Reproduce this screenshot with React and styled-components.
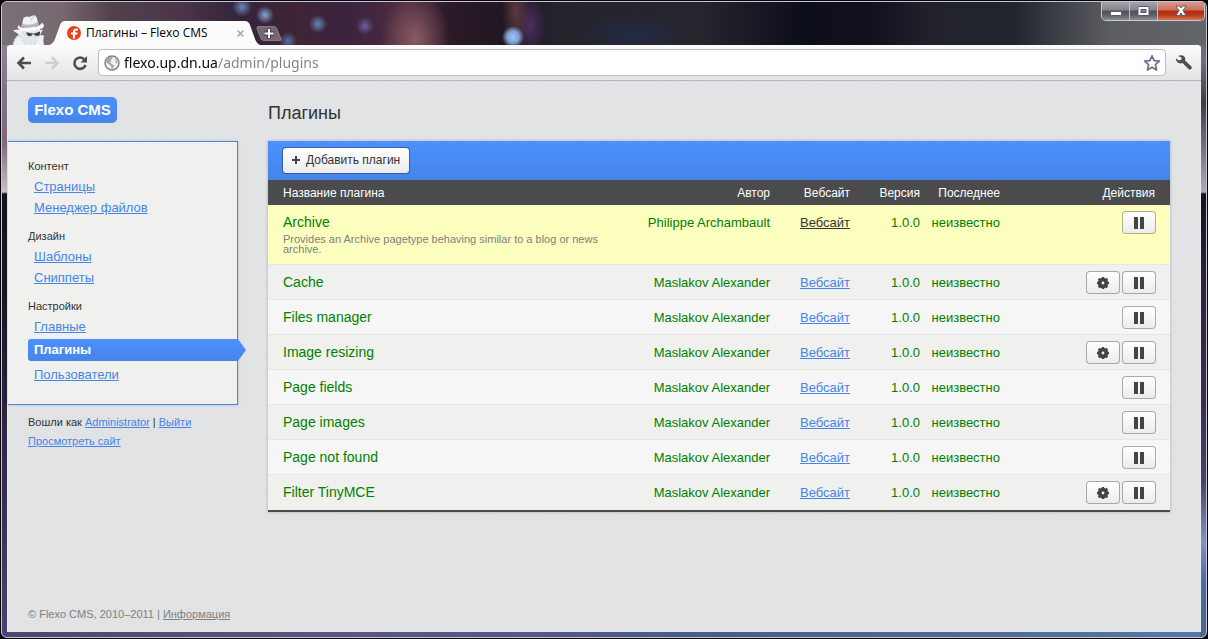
import React from "react";
import styled, { createGlobalStyle, css } from "styled-components";

const GlobalStyle = createGlobalStyle`
  *, *::before, *::after { box-sizing: border-box; }
  html, body { margin: 0; background: #08060c; }
  body { font-family: "Liberation Sans", Arial, sans-serif; font-size: 13px; color: #333; }
  button, input { font-family: inherit; margin: 0; }
`;

const BLUE = "#4585e8";
const uiFont = `"Open Sans", "Noto Sans", sans-serif`;

/* ---------- window chrome ---------- */

const Desktop = styled.div`
  display: flex;
  min-height: 100vh;
  padding: 1px;
`;

const Window = styled.div`
  flex: 1;
  min-width: 0;
  display: flex;
  flex-direction: column;
  padding: 0 5px 5px;
  border: 1px solid #c9c6d0;
  border-radius: 6px;
  overflow: hidden;
  background:
    linear-gradient(#6f6670 0, #8f7f96 45px, #85708a 90px, #806878 140px, #c9c2c8 190px, #17111f 192px, #1d1628 300px, #352c4c 480px, #4a4470 100%) 0 0 / 6px 100% no-repeat,
    linear-gradient(#5c5e63 0, #6d7076 60px, #3c3e44 100px, #a9abb0 190px, #14131f 192px, #2d2340 280px, #3b2d52 400px, #45456f 480px, #8193c4 540px, #4a6aa2 580px, #49678f 100%) 100% 0 / 6px 100% no-repeat,
    linear-gradient(90deg, #4b4673, #5a5685 30%, #4b5c8c 60%, #5578a8) 0 100% / 100% 6px no-repeat,
    #1d1c26;
`;

const TitleBar = styled.header`
  display: flex;
  height: 43px;
  margin: 0 -5px;
  padding-left: 10px;
  background:
    radial-gradient(circle at 240px 5px, #6d86b8 0, transparent 10px),
    radial-gradient(circle at 263px 13px, #86a4d6 0, transparent 9px),
    radial-gradient(circle at 316px 22px, #6486bb 0, transparent 9px),
    radial-gradient(circle at 363px 24px, #6a5e9c 0, transparent 9px),
    radial-gradient(circle at 286px 39px, #5370a5 0, transparent 9px),
    radial-gradient(circle at 511px 35px, #a3c4f0 0, #7d9fd3 6px, transparent 11px),
    radial-gradient(ellipse 14px 40px at 514px 8px, #5d3a3f, transparent),
    radial-gradient(ellipse 16px 30px at 528px 24px, #4a2f61, transparent),
    radial-gradient(ellipse 34px 48px at 413px 36px, #8a5a64, transparent),
    radial-gradient(ellipse 50px 20px at 632px 32px, #222b47, transparent),
    linear-gradient(90deg, #7a7079 0, #77696f 60px, #51414c 110px, #4b3548 180px, #33243c 235px, #402436 290px, #3c2440 350px, #4d2a3d 400px, #2b1a28 450px, #201722 500px, #25242d 560px, #25252e 700px, #0c0e1a 800px, #10111d 870px, #21222c 930px, #20242d 1010px, #5c5e63 1110px, #62656a 100%);
`;

const Incognito = styled.div`
  flex: none;
  width: 34px;
  padding-top: 12px;
  svg { display: block; }
`;

const Tab = styled.div`
  position: relative;
  flex: none;
  display: flex;
  align-items: center;
  width: 212px;
  height: 24px;
  margin: 19px 0 0 2px;
  padding: 0 14px 0 19px;
`;

const TabShape = styled.svg`
  position: absolute;
  inset: 0;
`;

const TabTitle = styled.button`
  position: relative;
  flex: 1;
  display: flex;
  align-items: center;
  gap: 5px;
  padding: 0;
  border: 0;
  background: none;
  color: #000;
  font: 12px/18px ${uiFont};
  white-space: nowrap;
`;

const PlainButton = styled.button`
  position: relative;
  flex: none;
  display: flex;
  align-items: center;
  justify-content: center;
  width: ${(p) => p.$w}px;
  height: ${(p) => p.$h}px;
  padding: 0;
  border: 0;
  background: none;
  svg { display: block; }
`;

const NewTab = styled(PlainButton)`
  margin: 24px 0 0 -4px;
`;

const Controls = styled.div`
  display: flex;
  flex: none;
  height: 19px;
  margin: 0 1px 0 auto;
  border: 1px solid #c9c9cd;
  border-top: 0;
  border-radius: 0 0 5px 5px;
  overflow: hidden;
`;

const Control = styled.button`
  display: flex;
  align-items: center;
  justify-content: center;
  width: ${(p) => (p.$close ? 46 : 28)}px;
  padding: 0;
  border: 0;
  border-right: ${(p) => (p.$close ? 0 : "1px solid #c0c0c6")};
  background: ${(p) =>
    p.$close
      ? "linear-gradient(#d99a8c 0, #c9705c 8px, #b02c12 9px, #b8381a 13px, #d4785a)"
      : "linear-gradient(#a3a4a8 0, #85868c 8px, #50525a 9px, #5d5f67 13px, #8c8e94)"};
`;

const Toolbar = styled.div`
  display: flex;
  align-items: center;
  height: 36px;
  padding: 0 5px;
  border-bottom: 1px solid #b4b5bf;
  border-radius: 3px 3px 0 0;
  background: linear-gradient(#fcfcfc, #e3e3e3);
`;

const NavButtons = styled.div`
  display: flex;
  flex: none;
  gap: 4px;
  margin-right: 6px;
`;

const Omnibox = styled.form`
  flex: 1;
  min-width: 0;
  display: flex;
  align-items: center;
  gap: 4px;
  height: 27px;
  margin-right: 6px;
  padding: 0 3px 0 5px;
  border: 1px solid #bdbdbf;
  border-radius: 4px;
  background: #fff;
`;

const Address = styled.input`
  flex: 1;
  min-width: 0;
  height: 22px;
  padding: 0;
  border: 0;
  outline: 0;
  font: 14px/22px "Noto Sans", sans-serif;
  color: transparent;
  background: linear-gradient(90deg, #0a0a0a 93px, #808080 93px);
  background-clip: text;
`;

/* ---------- page ---------- */

const Page = styled.div`
  flex: 1;
  display: flex;
  flex-direction: column;
  border-left: 1px solid #e9eaeb;
  border-right: 1px solid #e9eaeb;
  background: repeating-linear-gradient(135deg, #e2e4e5 0 1px, #e0e2e3 1px 3px);
`;

const Columns = styled.div`
  display: flex;
  align-items: flex-start;
  gap: 30px;
  padding-right: 30px;
`;

const Sidebar = styled.aside`
  flex: none;
  width: 230px;
  padding-top: 16px;
`;

const Logo = styled.a`
  display: block;
  width: 89px;
  margin: 0 0 18px 20px;
  border-radius: 5px;
  background: linear-gradient(#4d90fe, ${BLUE});
  color: #fff;
  font-size: 15px;
  font-weight: bold;
  line-height: 26px;
  text-align: center;
  text-decoration: none;
  white-space: nowrap;
`;

const Menu = styled.nav`
  padding: 15px 0 19px 20px;
  border: 1px solid ${BLUE};
  border-left: 0;
  background: #f0f0ee;
  box-shadow: 0 0 3px rgba(0, 0, 0, 0.15);
`;

const MenuGroup = styled.section`
  & + & { margin-top: 9px; }
`;

const MenuHeading = styled.h2`
  margin: 0;
  color: #333;
  font-size: 11px;
  font-weight: normal;
  line-height: 19px;
`;

const MenuList = styled.ul`
  margin: 0;
  padding: 0;
  list-style: none;
`;

const Link = styled.a`
  color: ${(p) => (p.$dark ? "#333" : p.$muted ? "#808080" : BLUE)};
  text-decoration: underline;
`;

const MenuItem = styled.li`
  position: relative;
  padding-left: 6px;
  line-height: 21px;
  ${(p) =>
    p.$active &&
    css`
      margin: 2px -1px 3px 0;
      border-radius: 3px 0 0 3px;
      background: linear-gradient(#4d90fe, ${BLUE});
      line-height: 22px;
      font-weight: bold;
      ${Link} { color: #fff; text-decoration: none; }
      &::after {
        content: "";
        position: absolute;
        top: 0;
        left: 100%;
        width: 8px;
        height: 100%;
        background: inherit;
        clip-path: polygon(0 0, 100% 50%, 0 100%);
      }
    `}
`;

const Account = styled.div`
  padding: 8px 0 0 20px;
  font-size: 11px;
  line-height: 19px;
  p { margin: 0; }
`;

const Main = styled.main`
  flex: 1;
  min-width: 0;
  padding-top: 20px;
`;

const Title = styled.h1`
  margin: 0 0 16px;
  font-size: 18px;
  font-weight: normal;
  line-height: 24px;
`;

const Panel = styled.div`
  border-bottom: 2px solid #4b4b4d;
  background: #f0f0ee;
  box-shadow: 0 0 3px rgba(0, 0, 0, 0.25);
`;

const Actions = styled.div`
  display: flex;
  height: 39px;
  padding: 6px 14px;
  background: linear-gradient(#4d90fe, ${BLUE});
`;

const Button = styled.button`
  display: inline-flex;
  align-items: center;
  justify-content: center;
  gap: 6px;
  height: ${(p) => (p.$small ? 23 : 27)}px;
  width: ${(p) => (p.$small ? "34px" : "auto")};
  padding: ${(p) => (p.$small ? "0" : "0 9px 1px 9px")};
  border: 1px solid rgba(0, 0, 0, 0.3);
  border-radius: 4px;
  background: linear-gradient(#fff, #ececec) padding-box;
  color: #333;
  font-size: 12px;
  white-space: nowrap;
`;

const Table = styled.table`
  width: 100%;
  table-layout: fixed;
  border-collapse: separate;
  border-spacing: 0;
`;

const Head = styled.th`
  width: ${(p) => (p.$w ? p.$w + "px" : "auto")};
  height: 25px;
  padding: ${(p) => (p.$first ? "0 0 0 15px" : p.$last ? "0 15px 0 0" : "0")};
  background: #4b4b4d;
  color: #fff;
  font-size: 12px;
  font-weight: normal;
  text-align: ${(p) => (p.$first ? "left" : "right")};
`;

const Row = styled.tr`
  background: #f6f6f6;
  &:nth-child(even) { background: #f0f0ee; }
  &:first-child { background: #fdffbf; }
`;

const Cell = styled.td`
  height: 35px;
  padding: 9px 0 0;
  border-bottom: 1px solid #e6e6e6;
  color: #008000;
  line-height: 17px;
  text-align: right;
  vertical-align: top;
  ${Row}:last-child & { border-bottom-color: #f0f0ee; }
`;

const NameCell = styled(Cell)`
  padding: 8px 20px 8px 15px;
  text-align: left;
  font-size: 14px;
  line-height: 18px;
`;

const ButtonCell = styled(Cell)`
  padding: 6px 14px 0 0;
`;

const ButtonGroup = styled.div`
  display: flex;
  justify-content: flex-end;
  gap: 2px;
`;

const Description = styled.p`
  margin: 3px 0 2px;
  color: #808080;
  font-size: 11px;
  line-height: 10px;
`;

const Footer = styled.footer`
  margin-top: auto;
  padding: 0 20px 8px;
  color: #808080;
  font-size: 11px;
  line-height: 19px;
`;

/* ---------- icons ---------- */

const SpyIcon = () => (
  <svg width="34" height="31" viewBox="0 0 34 31">
    <path d="M1 31 Q2 24 7 20.500 L1 16.500 Q5 15 10 16 Q18 14 26 16.500 L31 15.500 L28 21 L32 21.500 Q30.500 26 32 31Z" fill="#eef1f5" />
    <path d="M1 31 Q2 24 7 20.500 L14 31 M28 21 L22 31" fill="none" stroke="#c5ccd8" />
    <path d="M8 21 Q9 27 17 31 H20 Q27 27 28 21 Q18 25 8 21Z" fill="#e2e6ed" />
    <path d="M10 15 Q18 18.500 28 14.500 V19 Q26 24 18.500 23.500 Q11 24 10 18Z" fill="#dfe2e7" />
    <path d="M14.500 18.300 L20 19.500 L22.500 19.500 L28 17.500 Q28.500 22 25.500 22 Q22.500 22 21.800 20.300 H20.500 Q19.800 22.200 17.500 22.200 Q14.500 22 14.500 18.300Z" fill="#443e48" />
    <path d="M6.500 11 Q7.500 13.500 11 13.800 L25 12.500 Q29.500 10.500 30 8.500 Q34 12 30 14.500 Q18 19.500 9 16.500 Q4 14 6.500 11Z" fill="#fafafa" />
    <path d="M9.500 12.500 L11.500 4 Q14 1.500 17.500 3 Q21 .5 24 2 Q25.500 5 26.500 11 Q18 15.500 9.500 12.500Z" fill="#f1f1f3" />
    <path d="M10.200 9.500 Q18 12.500 26 8 L26.700 11 Q18 15.500 9.500 12.700Z" fill="#b5bbc3" />
    <path d="M17.500 3 L18.500 8 L24 2 Q21 .5 17.500 3Z" fill="#dcdfe4" />
  </svg>
);

const Favicon = () => (
  <svg width="14" height="14" viewBox="0 0 14 14">
    <circle cx="7" cy="7" r="7" fill="#e8401c" />
    <path d="M11 3.500 H9.500 Q7 3.500 7 6 V12.500 M4 7.500 H10.500" fill="none" stroke="#fff" strokeWidth="2.200" />
  </svg>
);

const CloseIcon = () => (
  <svg width="7" height="7" viewBox="0 0 7 7">
    <path d="M.5 .5 L6.500 6.500 M6.500 .5 L.5 6.500" stroke="#a5a5a5" strokeWidth="1.500" />
  </svg>
);

const NewTabIcon = () => (
  <svg width="26" height="15" viewBox="0 0 26 15">
    <path d="M2 .5 H18 Q20 .5 21 3 L25 13 Q25.500 14.500 24 14.500 H8 Q5.500 14.500 4.500 12 L1 3 Q.5 .5 2 .5Z" fill="#fff" fillOpacity=".3" stroke="#a79ba6" strokeOpacity=".6" />
    <path d="M13 2.500 V12.500 M8 7.500 H18" stroke="#453945" strokeWidth="4" />
    <path d="M13 3 V12 M8.500 7.500 H17.500" stroke="#fff" strokeWidth="2" />
  </svg>
);

const ArrowIcon = ({ color, flip }) => (
  <svg width="16" height="14" viewBox="0 0 16 14" transform={flip ? "scale(-1 1)" : undefined}>
    <path d="M8 1.500 L2.500 7 L8 12.500 M3 7 H15" fill="none" stroke={color} strokeWidth="2.600" />
  </svg>
);

const ReloadIcon = () => (
  <svg width="16" height="16" viewBox="0 0 16 16">
    <path d="M12.500 4.500 A5.700 5.700 0 1 0 13.500 10" fill="none" stroke="#4d4d4d" strokeWidth="2.600" />
    <path d="M15 1 V7.500 H8.500Z" fill="#4d4d4d" />
  </svg>
);

const GlobeIcon = () => (
  <svg width="16" height="16" viewBox="0 0 16 16">
    <circle cx="8" cy="8" r="7" fill="#f2f2f2" stroke="#828282" strokeWidth="1.500" />
    <path d="M2 5 Q4 1.500 8 2 L9 3.500 L6.500 5 L7.500 7 L5.500 7 L8.500 9.500 L10.500 10.500 L9 13.500 L7.500 14 L7 11 L4.500 9 L2.500 8Z" fill="#a9a9a9" />
    <path d="M10.500 3 L13 4.500 L14 7.500 L12.500 9 L11 7 L11.500 5Z" fill="#bdbdbd" />
  </svg>
);

const StarIcon = () => (
  <svg width="18" height="18" viewBox="0 0 18 18">
    <path d="M9 1.800 L11.100 6.700 L16.400 7.200 L12.400 10.700 L13.600 15.900 L9 13.200 L4.400 15.900 L5.600 10.700 L1.600 7.200 L6.900 6.700Z" fill="#fff" stroke="#65708a" strokeWidth="1.700" strokeLinejoin="round" />
  </svg>
);

const WrenchIcon = () => (
  <svg width="18" height="17" viewBox="0 0 18 17">
    <path d="M3 2 Q8 0 10 3.500 Q10.500 5.500 10 6.500 L16.500 12.500 Q17.500 14.500 15.500 15.500 Q14 16 13 14.500 L7.500 9 Q3 10.500 1 6 L1 4.500 L4 6.500 L6.500 5.500 V3.500Z" fill="#4d4d4d" />
  </svg>
);

const MinimizeIcon = () => (
  <svg width="12" height="12" viewBox="0 0 12 12">
    <rect x=".5" y="6.500" width="11" height="4" rx="1" fill="#fff" stroke="#55586a" />
  </svg>
);

const MaximizeIcon = () => (
  <svg width="13" height="12" viewBox="0 0 13 12">
    <rect x="1" y="1.500" width="11" height="9" rx="1" fill="#fff" stroke="#55586a" />
    <rect x="4" y="4.500" width="5" height="3" fill="#84868c" stroke="#55586a" />
  </svg>
);

const WindowCloseIcon = () => (
  <svg width="14" height="12" viewBox="0 0 14 12">
    <path d="M2 1 H5.500 L7 3 L8.500 1 H12 L9 5.500 L12 10.500 H8.500 L7 8 L5.500 10.500 H2 L5 5.500Z" fill="#fff" stroke="#55586a" strokeWidth=".9" />
  </svg>
);

const PlusIcon = () => (
  <svg width="8" height="8" viewBox="0 0 8 8">
    <path d="M4 0 V8 M0 4 H8" stroke="#444" strokeWidth="2" />
  </svg>
);

const PauseIcon = () => (
  <svg width="10" height="12" viewBox="0 0 10 12">
    <path d="M0 0 H4 V12 H0Z M6 0 H10 V12 H6Z" fill="#444" />
  </svg>
);

const GearIcon = () => (
  <svg width="12" height="12" viewBox="0 0 12 12">
    <circle cx="6" cy="6" r="3.300" fill="none" stroke="#444" strokeWidth="3.800" />
    <path d="M6 0 V3 M6 9 V12 M0 6 H3 M9 6 H12 M1.700 1.700 L4 4 M8 8 L10.300 10.300 M10.300 1.700 L8 4 M4 8 L1.700 10.300" stroke="#444" strokeWidth="2.400" />
  </svg>
);

/* ---------- data ---------- */

const menu = [
  { heading: "Контент", items: ["Страницы", "Менеджер файлов"] },
  { heading: "Дизайн", items: ["Шаблоны", "Сниппеты"] },
  { heading: "Настройки", items: ["Главные", "Плагины", "Пользователи"] },
];

const ALEX = "Maslakov Alexander";
const plugins = [
  {
    name: "Archive",
    author: "Philippe Archambault",
    description: "Provides an Archive pagetype behaving similar to a blog or news archive.",
  },
  { name: "Cache", author: ALEX, settings: true },
  { name: "Files manager", author: ALEX },
  { name: "Image resizing", author: ALEX, settings: true },
  { name: "Page fields", author: ALEX },
  { name: "Page images", author: ALEX },
  { name: "Page not found", author: ALEX },
  { name: "Filter TinyMCE", author: ALEX, settings: true },
];

export default function App() {
  return (
    <Desktop>
      <GlobalStyle />
      <Window>
        <TitleBar>
          <Incognito><SpyIcon /></Incognito>
          <Tab>
            <TabShape width="212" height="24" viewBox="0 0 212 24" aria-hidden="true">
              <path d="M1 24 Q5 23 7 18 L12 4 Q13.500 0 17 0 H197 Q200.500 0 202 4 L207 18 Q209 23 212 24Z" fill="#fcfcfc" />
            </TabShape>
            <TabTitle><Favicon />Плагины – Flexo CMS</TabTitle>
            <PlainButton $w={11} $h={14} aria-label="Закрыть вкладку"><CloseIcon /></PlainButton>
          </Tab>
          <NewTab $w={26} $h={15} aria-label="Новая вкладка"><NewTabIcon /></NewTab>
          <Controls>
            <Control aria-label="Свернуть"><MinimizeIcon /></Control>
            <Control aria-label="Развернуть"><MaximizeIcon /></Control>
            <Control $close aria-label="Закрыть"><WindowCloseIcon /></Control>
          </Controls>
        </TitleBar>
        <Toolbar>
          <NavButtons>
            <PlainButton $w={24} $h={24} aria-label="Назад"><ArrowIcon color="#4d4d4d" /></PlainButton>
            <PlainButton $w={24} $h={24} aria-label="Вперёд"><ArrowIcon color="#cfcfcf" flip /></PlainButton>
            <PlainButton $w={24} $h={24} aria-label="Обновить"><ReloadIcon /></PlainButton>
          </NavButtons>
          <Omnibox>
            <GlobeIcon />
            <Address aria-label="Адрес" defaultValue="flexo.up.dn.ua/admin/plugins" />
            <PlainButton type="button" $w={20} $h={20} aria-label="В закладки"><StarIcon /></PlainButton>
          </Omnibox>
          <PlainButton $w={24} $h={24} aria-label="Настройка"><WrenchIcon /></PlainButton>
        </Toolbar>
        <Page>
          <Columns>
            <Sidebar>
              <Logo href="#">Flexo CMS</Logo>
              <Menu>
                {menu.map((group) => (
                  <MenuGroup key={group.heading}>
                    <MenuHeading>{group.heading}</MenuHeading>
                    <MenuList>
                      {group.items.map((item) => (
                        <MenuItem key={item} $active={item === "Плагины"}>
                          <Link href="#">{item}</Link>
                        </MenuItem>
                      ))}
                    </MenuList>
                  </MenuGroup>
                ))}
              </Menu>
              <Account>
                <p>Вошли как <Link href="#">Administrator</Link> | <Link href="#">Выйти</Link></p>
                <p><Link href="#">Просмотреть сайт</Link></p>
              </Account>
            </Sidebar>
            <Main>
              <Title>Плагины</Title>
              <Panel>
                <Actions>
                  <Button><PlusIcon />Добавить плагин</Button>
                </Actions>
                <Table>
                  <thead>
                    <tr>
                      <Head $first>Название плагина</Head>
                      <Head $w={150}>Автор</Head>
                      <Head $w={80}>Вебсайт</Head>
                      <Head $w={70}>Версия</Head>
                      <Head $w={80}>Последнее</Head>
                      <Head $w={170} $last>Действия</Head>
                    </tr>
                  </thead>
                  <tbody>
                    {plugins.map((p) => (
                      <Row key={p.name}>
                        <NameCell>
                          {p.name}
                          {p.description && <Description>{p.description}</Description>}
                        </NameCell>
                        <Cell>{p.author}</Cell>
                        <Cell><Link href="#" $dark={!!p.description}>Вебсайт</Link></Cell>
                        <Cell>1.0.0</Cell>
                        <Cell>неизвестно</Cell>
                        <ButtonCell>
                          <ButtonGroup>
                            {p.settings && <Button $small aria-label="Настройки"><GearIcon /></Button>}
                            <Button $small aria-label="Отключить"><PauseIcon /></Button>
                          </ButtonGroup>
                        </ButtonCell>
                      </Row>
                    ))}
                  </tbody>
                </Table>
              </Panel>
            </Main>
          </Columns>
          <Footer>© Flexo CMS, 2010–2011 | <Link href="#" $muted>Информация</Link></Footer>
        </Page>
      </Window>
    </Desktop>
  );
}
